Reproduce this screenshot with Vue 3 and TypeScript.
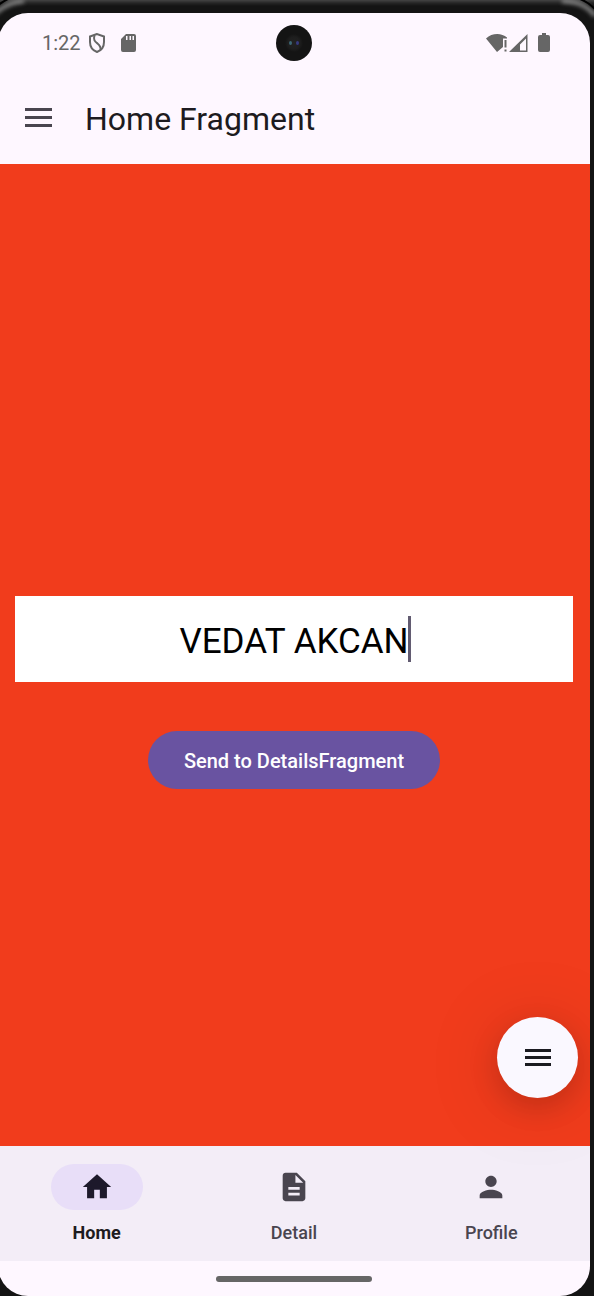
<script setup lang="ts">
import { ref } from 'vue'

type TabId = 'home' | 'detail' | 'profile'

interface Tab {
  id: TabId
  label: string
  path: string
}

const name = ref('VEDAT AKCAN')
const active = ref<TabId>('home')

const tabs: Tab[] = [
  {
    id: 'home',
    label: 'Home',
    path: 'M10 20v-6h4v6h5v-8h3L12 3 2 12h3v8z',
  },
  {
    id: 'detail',
    label: 'Detail',
    path: 'M14 2H6c-1.1 0-1.99.9-1.99 2L4 20c0 1.1.89 2 1.99 2H18c1.1 0 2-.9 2-2V8l-6-6zm2 16H8v-2h8v2zm0-4H8v-2h8v2zm-3-5V3.5L18.5 9H13z',
  },
  {
    id: 'profile',
    label: 'Profile',
    path: 'M12 12c2.21 0 4-1.79 4-4s-1.79-4-4-4-4 1.79-4 4 1.79 4 4 4zm0 2c-2.67 0-8 1.34-8 4v2h16v-2c0-2.66-5.33-4-8-4z',
  },
]
</script>

<template>
  <div class="device">
    <svg class="rim rim-left" viewBox="0 0 40 40" aria-hidden="true">
      <path class="shine" d="M-4 13C3 6 11 2 24 1" />
      <path class="seam" d="M-3 6Q2 2 8 -1" />
    </svg>
    <svg class="rim rim-right" viewBox="0 0 40 40" aria-hidden="true">
      <path class="shine" d="M8 1C24 1 34 6 41 16" />
      <path class="seam" d="M26 -1Q34 2 41 9" />
    </svg>

    <div class="screen">
      <header>
        <div class="status">
          <div class="status-side start">
            <span class="time">1:22</span>
            <svg class="shield" viewBox="0 0 18 22" aria-hidden="true">
              <path d="M9 2 2 4.500V10c0 5 3 8.500 7 10 4-1.500 7-5 7-10V4.500z" />
              <path d="M6.500 3.500C5 8 7 9.500 9.500 11.500S13 15 12.500 18" />
            </svg>
            <svg class="sd" viewBox="0 0 16 20" aria-hidden="true">
              <path
                fill="currentColor"
                fill-rule="evenodd"
                d="M6 1h8a2 2 0 0 1 2 2v14a2 2 0 0 1-2 2H3a2 2 0 0 1-2-2V6zM6 3v4h1.500V3zM9.500 3v4H11V3zM12.500 3v4H14V3z"
              />
            </svg>
          </div>
          <div class="camera" aria-hidden="true"><i></i><i></i></div>
          <div class="status-side end">
            <svg class="wifi" viewBox="0 0 22 20" aria-hidden="true">
              <path fill="currentColor" d="M0 5.500C6 -.3 15.500 -.3 21 4.500V5.500H17V14L11 19z" />
              <path fill="currentColor" d="M18.500 7h2v7.500h-2zM18.500 16.500h2v2h-2z" />
            </svg>
            <svg class="signal" viewBox="0 0 19 20" aria-hidden="true">
              <path fill="currentColor" fill-rule="evenodd" d="M0 19 18.500 1V19zM11 11.500v6h6V5.500z" />
            </svg>
            <svg class="battery" viewBox="0 0 12 20" aria-hidden="true">
              <path fill="currentColor" d="M4 0h4v2h2a2 2 0 0 1 2 2v13a2 2 0 0 1-2 2H2a2 2 0 0 1-2-2V4a2 2 0 0 1 2-2h2z" />
            </svg>
          </div>
        </div>
        <div class="toolbar">
          <button class="menu" type="button" aria-label="Open menu">
            <svg viewBox="0 0 27 19" aria-hidden="true">
              <path fill="currentColor" d="M0 0h27v3H0zM0 8h27v3H0zM0 16h27v3H0z" />
            </svg>
          </button>
          <h1>Home Fragment</h1>
        </div>
      </header>

      <main>
        <div class="space-above"></div>
        <label class="field">
          <input v-model="name" type="text" aria-label="Name" />
          <span class="caret"></span>
        </label>
        <button class="send" type="button">Send to DetailsFragment</button>
        <div class="space-below"></div>
        <button class="fab" type="button" aria-label="Actions">
          <svg viewBox="0 0 26 17" aria-hidden="true">
            <path fill="currentColor" d="M0 0h26v3H0zM0 7h26v3H0zM0 14h26v3H0z" />
          </svg>
        </button>
      </main>

      <nav>
        <button
          v-for="tab in tabs"
          :key="tab.id"
          class="tab"
          :class="{ active: tab.id === active }"
          type="button"
          @click="active = tab.id"
        >
          <span class="pill">
            <svg viewBox="0 0 24 24" aria-hidden="true"><path fill="currentColor" :d="tab.path" /></svg>
          </span>
          <span class="label">{{ tab.label }}</span>
        </button>
      </nav>
      <div class="gesture"><span></span></div>
    </div>
  </div>
</template>

<style>
body {
  background: #141414;
}
</style>

<style scoped>
.device {
  position: relative;
  box-sizing: border-box;
  display: flex;
  min-height: 100vh;
  padding: 13px 4px 0 0;
  overflow: hidden;
  background: linear-gradient(#444 0, #262626 3px, #141414 6px, #141414 100%);
  font-family: Roboto, 'Liberation Sans', sans-serif;
}
.rim {
  position: absolute;
  top: 0;
  width: 40px;
  height: 40px;
  fill: none;
}
.rim-left {
  left: 0;
}
.rim-right {
  right: 0;
}
.shine {
  stroke: #8a8a8a;
  stroke-width: 4px;
  filter: blur(2px);
}
.seam {
  stroke: #000;
  stroke-width: 2px;
}
.screen {
  position: relative;
  display: flex;
  flex: 1;
  flex-direction: column;
  margin-left: -2px;
  overflow: hidden;
  border-radius: 30px;
  background: #fef7ff;
}
button {
  padding: 0;
  border: 0;
  background: none;
  color: inherit;
  font-family: inherit;
}
svg {
  display: block;
}
.status {
  display: grid;
  grid-template-columns: 1fr 36px 1fr;
  align-items: center;
  height: 60px;
  color: #666;
}
.status-side {
  display: flex;
  align-items: center;
}
.start {
  padding-left: 44px;
}
.end {
  justify-content: flex-end;
  padding-right: 40px;
}
.time {
  font-size: 20px;
  line-height: 24px;
}
.shield {
  width: 18px;
  height: 22px;
  margin-left: 7px;
  fill: none;
  stroke: currentColor;
  stroke-width: 2;
}
.sd {
  width: 16px;
  height: 20px;
  margin-left: 14px;
}
.camera {
  display: flex;
  align-items: center;
  justify-content: center;
  gap: 4px;
  height: 36px;
  border-radius: 50%;
  background: radial-gradient(#222 0, #1e1e1e 6px, #141414 9px);
}
.camera i {
  width: 3px;
  height: 4px;
  border-radius: 50%;
  background: #3c6674;
}
.camera i:last-child {
  background: #363a80;
}
.wifi {
  width: 22px;
  height: 20px;
}
.signal {
  width: 19px;
  height: 20px;
  margin-left: 1px;
}
.battery {
  width: 12px;
  height: 20px;
  margin-left: 10px;
}
.toolbar {
  display: flex;
  align-items: center;
  gap: 33px;
  height: 89px;
  padding: 0 27px 2px;
  color: #49454f;
}
.menu svg {
  width: 27px;
  height: 19px;
}
h1 {
  margin: 0;
  padding-top: 2px;
  color: #1d1b20;
  font-size: 32px;
  font-weight: 400;
  line-height: 40px;
}
main {
  position: relative;
  display: flex;
  flex: 1;
  flex-direction: column;
  align-items: center;
  padding: 0 17px;
  background: #f13c1c;
}
.space-above {
  flex: 432;
}
.space-below {
  flex: 357;
}
.field {
  display: flex;
  align-items: center;
  justify-content: center;
  align-self: stretch;
  height: 86px;
  background: #fff;
}
.field input {
  field-sizing: content;
  min-width: 1px;
  padding: 5px 0 0;
  border: 0;
  outline: 0;
  background: none;
  color: #000;
  font-family: inherit;
  font-size: 35px;
  line-height: 42px;
}
.caret {
  width: 3px;
  height: 46px;
  margin: 0 -2px 0 -1px;
  background: #625b71;
}
.send {
  height: 58px;
  margin-top: 49px;
  padding: 2px 36px 0;
  border-radius: 29px;
  background: #6953a1;
  color: #fff;
  font-size: 20px;
  font-weight: 500;
  line-height: 28px;
}
.fab {
  position: absolute;
  z-index: 1;
  right: 12px;
  bottom: 48px;
  display: grid;
  place-items: center;
  width: 81px;
  height: 81px;
  border-radius: 50%;
  background: #faf8ff;
  box-shadow: 0 10px 28px rgb(0 0 0 / 14%), 0 6px 80px rgb(0 0 0 / 14%);
  color: #1a1b21;
}
.fab svg {
  width: 26px;
  height: 17px;
}
nav {
  display: grid;
  grid-template-columns: repeat(3, 1fr);
  height: 115px;
  background: #f3edf7;
}
.tab {
  display: flex;
  flex-direction: column;
  align-items: center;
  gap: 11px;
  padding-top: 18px;
  color: #49454f;
}
.pill {
  display: grid;
  place-items: center;
  width: 92px;
  height: 46px;
  border-radius: 23px;
}
.pill svg {
  width: 34px;
  height: 34px;
}
.active .pill {
  background: #e8def8;
  color: #1d192b;
}
.label {
  font-size: 18px;
  font-weight: 500;
  line-height: 24px;
}
.active .label {
  color: #1d1b20;
  font-weight: 700;
}
.gesture {
  display: flex;
  align-items: center;
  justify-content: center;
  height: 35px;
}
.gesture span {
  width: 156px;
  height: 6px;
  border-radius: 3px;
  background: #666;
}
</style>
